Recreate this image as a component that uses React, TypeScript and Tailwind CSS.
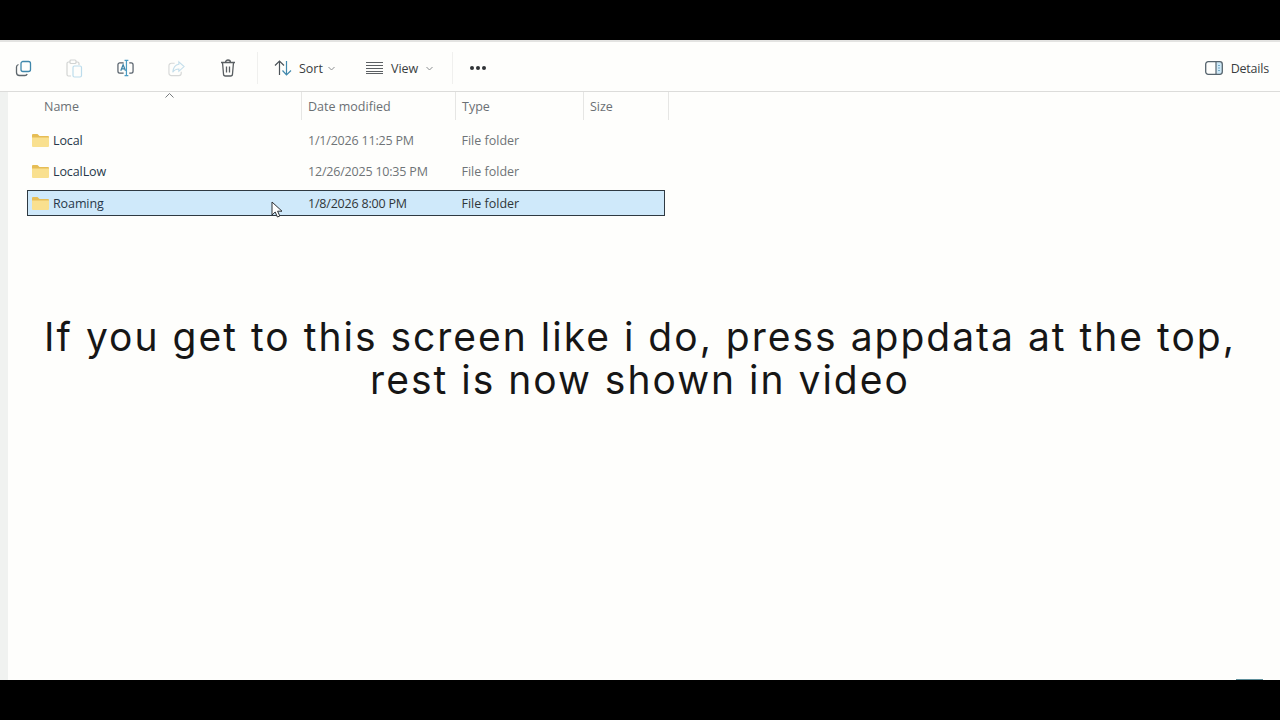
const rows = [
  { name: "Local", date: "1/1/2026 11:25 PM" },
  { name: "LocalLow", date: "12/26/2025 10:35 PM" },
  { name: "Roaming", date: "1/8/2026 8:00 PM", selected: true },
]

function FolderIcon() {
  return (
    <svg width="17" height="14" viewBox="0 0 17 14" className="mb-[3px] shrink-0">
      <path d="M0 2a1 1 0 0 1 1-1h4.500l2 2H16a1 1 0 0 1 1 1v1H0z" fill="#e6bd55" />
      <path d="M0 4.500h17V13a1 1 0 0 1-1 1H1a1 1 0 0 1-1-1z" fill="#f9e08f" />
    </svg>
  )
}

function CopyIcon() {
  return (
    <svg width="17" height="17" viewBox="0 0 17 17" fill="none" strokeWidth="1.300">
      <rect x="6" y="1.500" width="9.500" height="10" rx="2" stroke="#3f87ab" />
      <path d="M3.500 4.500C2 5 1.500 6 1.500 7v5.500c0 1.800 1.200 3 3 3H10c1 0 1.800-.5 2.200-1.500" stroke="#5d666c" />
    </svg>
  )
}

function PasteIcon() {
  return (
    <svg width="17" height="19" viewBox="0 0 17 19" fill="none" strokeWidth="1.200">
      <path d="M4 3H2.500A1.500 1.500 0 0 0 1 4.500v11A1.500 1.500 0 0 0 2.500 17H5" stroke="#d2d4d3" />
      <path d="M10 3h1.500A1.500 1.500 0 0 1 13 4.500V6" stroke="#d2d4d3" />
      <rect x="4" y="1" width="6" height="3.500" rx="1" stroke="#d2d4d3" />
      <rect x="7" y="7" width="8.500" height="11" rx="1.500" stroke="#bcdcec" />
    </svg>
  )
}

function RenameIcon() {
  return (
    <svg width="18" height="18" viewBox="0 0 18 18" fill="none" strokeWidth="1.300">
      <path d="M7 3.500H3A2 2 0 0 0 1 5.500v7a2 2 0 0 0 2 2h4" stroke="#56606a" />
      <path d="M13 3.500h2a2 2 0 0 1 2 2v7a2 2 0 0 1-2 2h-2" stroke="#56606a" />
      <path d="M10 1v16M8 1h4M8 17h4" stroke="#4b9cc4" />
      <path d="M4 12l2.500-6.500L9 12M5 10h3.500" stroke="#3c83a8" />
    </svg>
  )
}

function ShareIcon() {
  return (
    <svg width="18" height="17" viewBox="0 0 18 17" fill="none" strokeWidth="1.200">
      <path d="M7 3H3.500A2.500 2.500 0 0 0 1 5.500v8A2.500 2.500 0 0 0 3.500 16h8a2.500 2.500 0 0 0 2.500-2.500V12" stroke="#d6d8d7" />
      <path d="M11.500 1.500L17 6.500l-5.500 5V9C8.500 9 6.500 10 5 12.500 5.500 8 8 4.500 11.500 4z" stroke="#c4deeb" />
    </svg>
  )
}

function TrashIcon() {
  return (
    <svg width="16" height="18" viewBox="0 0 16 18" fill="none" stroke="#5a5f62" strokeWidth="1.300">
      <path d="M1 3.500h14M5.500 3.500c0-1.500 1-2.500 2.500-2.500s2.500 1 2.500 2.500" />
      <path d="M2.500 3.500l1 11.500a2 2 0 0 0 2 2h5a2 2 0 0 0 2-2l1-11.500" />
      <path d="M6.500 7.500v6M9.500 7.500v6" />
    </svg>
  )
}

function SortIcon() {
  return (
    <svg width="18" height="16" viewBox="0 0 18 16" fill="none" strokeWidth="1.200">
      <path d="M5.500 15V1M1 5.500L5.500 1 10 5.500" stroke="#4c5358" />
      <path d="M12.500 1v14M8.500 10.500l4 4.500 4.500-4.500" stroke="#4189ad" />
    </svg>
  )
}

function ViewIcon() {
  return (
    <svg width="17" height="12" viewBox="0 0 17 12" fill="none" stroke="#5c6063" strokeWidth="1">
      <path d="M0 .500h17M0 3.500h17M0 6.500h17M0 9.500h17M0 11.500h17" />
    </svg>
  )
}

function DetailsIcon() {
  return (
    <svg width="18" height="14" viewBox="0 0 18 14" fill="none">
      <rect x="11" y="1" width="6" height="12" fill="#cfe9f7" />
      <rect x=".700" y=".700" width="16.600" height="12.600" rx="2.500" stroke="#56646d" strokeWidth="1.300" />
      <path d="M11 1v12" stroke="#56646d" strokeWidth="1.200" />
      <path d="M14 4v1M14 6.500v1M14 9v1" stroke="#3f87ab" strokeWidth="1.200" />
    </svg>
  )
}

function Chevron() {
  return (
    <svg width="7" height="5" viewBox="0 0 7 5" fill="none" stroke="#8b8e90" strokeWidth="1">
      <path d="M.500 1l3 3 3-3" />
    </svg>
  )
}

function Cursor() {
  return (
    <svg width="13" height="18" viewBox="0 0 13 18" className="absolute left-[271px] top-[201px]">
      <path d="M1 1v13l3.200-3 2.200 5 2.400-1-2.200-4.800H11z" fill="#fff" stroke="#2c3034" strokeWidth="1" />
    </svg>
  )
}

function App() {
  return (
    <div className="relative flex h-[720px] w-[1280px] flex-col overflow-hidden bg-black font-['Open_Sans',sans-serif]">
      <div className="h-10 shrink-0 bg-black" />
      <div className="flex flex-1 flex-col bg-[#fefefc]">
        <div className="flex h-[52px] shrink-0 items-center border-t-2 border-b border-t-[#e3e3e1] border-b-[#dcdcda] pt-[3px] text-[12.500px] text-[#3a3d3f]">
          <div className="ml-[15px] flex w-[17px] justify-center"><CopyIcon /></div>
          <div className="ml-[34px] flex w-[17px] justify-center"><PasteIcon /></div>
          <div className="ml-[34px] flex w-[17px] justify-center"><RenameIcon /></div>
          <div className="ml-[34px] flex w-[17px] justify-center"><ShareIcon /></div>
          <div className="ml-[34px] flex w-[17px] justify-center"><TrashIcon /></div>
          <div className="ml-[21px] h-8 w-px bg-[#f0f0ee]" />
          <div className="ml-[16px]"><SortIcon /></div>
          <span className="ml-[7px] mt-[2px]">Sort</span>
          <div className="ml-[5px]"><Chevron /></div>
          <div className="ml-[31px]"><ViewIcon /></div>
          <span className="ml-[8px] mt-[2px]">View</span>
          <div className="ml-[8px]"><Chevron /></div>
          <div className="ml-[19px] h-8 w-px bg-[#f0f0ee]" />
          <div className="ml-[17px] flex gap-[2px]">
            <span className="h-[4px] w-[4px] rounded-full bg-[#303336]" />
            <span className="h-[4px] w-[4px] rounded-full bg-[#303336]" />
            <span className="h-[4px] w-[4px] rounded-full bg-[#303336]" />
          </div>
          <div className="ml-auto mr-[11px] flex items-center gap-[8px]">
            <DetailsIcon />
            <span className="mt-[2px] tracking-[-0.2px]">Details</span>
          </div>
        </div>
        <div className="flex flex-1">
          <div className="w-2 shrink-0 bg-[#f0f2f0]" />
          <div className="relative flex-1">
            <div className="flex h-7 text-[12.500px] text-[#6b7074]">
              <div className="w-[294px] border-r border-[#e6e6e4] pl-[36px] leading-[30px]">Name</div>
              <div className="w-[154px] border-r border-[#e6e6e4] pl-[6px] leading-[30px]">Date modified</div>
              <div className="w-[128px] border-r border-[#e6e6e4] pl-[6px] leading-[30px]">Type</div>
              <div className="w-[85px] border-r border-[#e6e6e4] pl-[6px] leading-[30px]">Size</div>
            </div>
            <div className="mt-[7px] flex flex-col gap-[5.500px] pl-[19px] text-[12.500px]">
              {rows.map((row) => (
                <div
                  key={row.name}
                  className={
                    row.selected
                      ? "flex h-[26px] w-[638px] items-center border border-[#2f3a42] bg-[#cfe9fa] pt-[2px] text-[#2f3639]"
                      : "flex h-[26px] w-[638px] items-center border border-transparent pt-[2px] text-[#6f7477]"
                  }
                >
                  <div className="flex w-[280px] items-center gap-[4px] pl-[4px]">
                    <FolderIcon />
                    <span className="tracking-[-0.1px] text-[#27384a]">{row.name}</span>
                  </div>
                  <div className="w-[153.500px] tracking-[-0.2px]">{row.date}</div>
                  <div>File folder</div>
                </div>
              ))}
            </div>
          </div>
        </div>
      </div>
      <div className="h-10 shrink-0 bg-black" />
      <svg width="9" height="5" viewBox="0 0 9 5" fill="none" stroke="#777b7e" className="absolute left-[165px] top-[93px]">
        <path d="M.500 4.500l4-4 4 4" />
      </svg>
      <div className="absolute right-[17px] top-[679px] h-px w-[27px] bg-[#5f8f9b]" />
      <Cursor />
      <div className="absolute inset-x-0 top-[315px] text-center font-['Inter',sans-serif] text-[39px] leading-[43px] tracking-[2px] text-[#161616]">
        If you get to this screen like i do, press appdata at the top,
        <br />
        rest is now shown in video
      </div>
    </div>
  )
}

export default App
